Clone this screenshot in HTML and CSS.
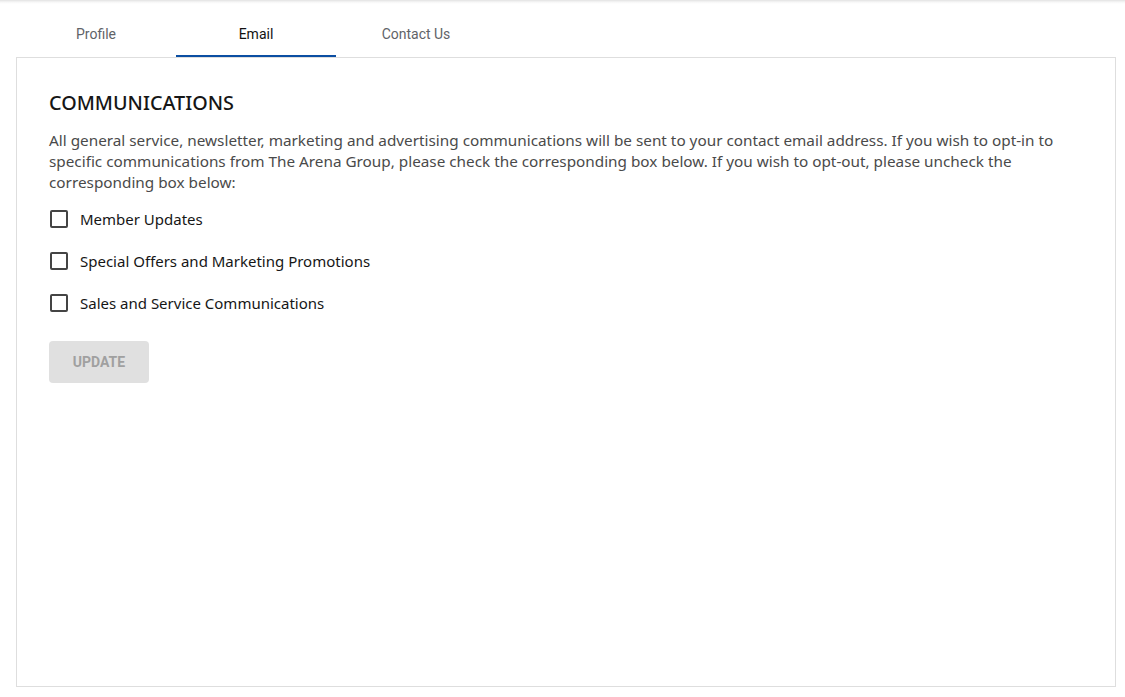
FILE: index.html
```html
<!DOCTYPE html>
<html>
<head>
<meta charset="utf-8">
<link rel="stylesheet" href="styles.css">
</head>
<body>
<div class="topbar"></div>
<div class="page">
  <nav class="tabs">
    <div class="tab">Profile</div>
    <div class="tab active">Email</div>
    <div class="tab">Contact Us</div>
  </nav>
  <section class="card">
    <h2 class="title">COMMUNICATIONS</h2>
    <p class="desc">All general service, newsletter, marketing and advertising communications will be sent to your contact email address. If you wish to opt-in to specific communications from The Arena Group, please check the corresponding box below. If you wish to opt-out, please uncheck the corresponding box below:</p>
    <div class="options">
      <label class="option"><span class="box"></span><span class="label">Member Updates</span></label>
      <label class="option"><span class="box"></span><span class="label">Special Offers and Marketing Promotions</span></label>
      <label class="option"><span class="box"></span><span class="label">Sales and Service Communications</span></label>
    </div>
    <button class="update">UPDATE</button>
  </section>
</div>
</body>
</html>
```
FILE: styles.css
```css
html, body {
  margin: 0;
  padding: 0;
  background: #fff;
}
body {
  font-family: "Noto Sans", "Open Sans", sans-serif;
  color: #333;
}
.topbar {
  height: 4px;
  background: linear-gradient(#e2e2e2, #f6f6f6 50%, #fff);
}
.page {
  padding: 0 9px 10px 16px;
}
.tabs {
  display: flex;
  height: 51px;
  padding-top: 2px;
}
.tab {
  width: 160px;
  display: flex;
  align-items: center;
  justify-content: center;
  font-family: Roboto, "Liberation Sans", sans-serif;
  font-size: 14px;
  color: #5f6368;
  box-sizing: border-box;
  padding-top: 5px;
}
.tab.active {
  color: #111;
  border-bottom: 2px solid #0b4ea2;
  padding-top: 7px;
}
.card {
  border: 1px solid #dedede;
  height: 628px;
  box-sizing: content-box;
  padding: 0 32px;
}
.title {
  margin: 33px 0 0;
  font-size: 19.8px;
  font-weight: 500;
  color: #161616;
  line-height: 24px;
}
.desc {
  margin: 15px 0 0;
  font-size: 15.3px;
  line-height: 21px;
  color: #4a4a4a;
}
.options {
  display: flex;
  flex-direction: column;
  margin-top: 5px;
}
.option {
  display: flex;
  align-items: center;
  height: 42px;
  font-size: 15px;
  color: #161616;
}
.box {
  width: 14px;
  height: 14px;
  border: 2px solid #444;
  border-radius: 2px;
  margin-left: 1px;
  margin-right: 12px;
}
.update {
  margin-top: 17px;
  width: 100px;
  height: 42px;
  border: none;
  border-radius: 4px;
  background: #e0e0e0;
  color: #a0a0a0;
  font-family: Roboto, "Liberation Sans", sans-serif;
  font-weight: 700;
  font-size: 14px;
  padding: 0;
}
```
